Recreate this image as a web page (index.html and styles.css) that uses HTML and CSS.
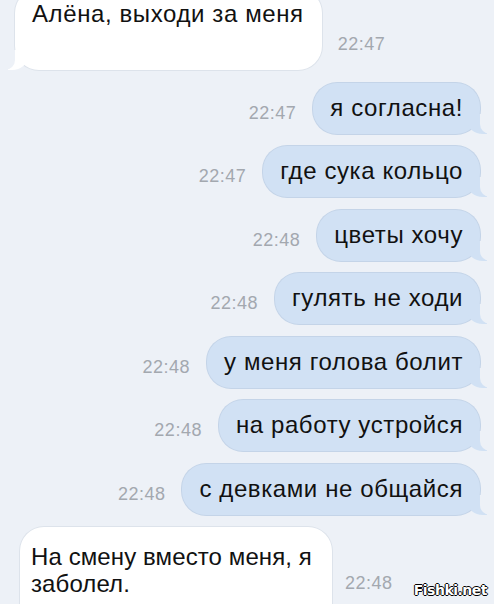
FILE: index.html
```html
<!DOCTYPE html>
<html lang="ru">
<head>
    <meta charset="UTF-8">
    <meta name="viewport" content="width=device-width, initial-scale=1.0">
    <title>Чат</title>
    <link rel="stylesheet" href="styles.css">
</head>
<body>
    <div class="chat">
        <!-- incoming -->
        <div class="row in first">
            <div class="bubble">Алёна, выходи за меня</div>
            <span class="time">22:47</span>
        </div>

        <div class="row out">
            <span class="time">22:47</span>
            <div class="bubble">я согласна!</div>
        </div>
        <div class="row out">
            <span class="time">22:47</span>
            <div class="bubble">где сука кольцо</div>
        </div>
        <div class="row out">
            <span class="time">22:48</span>
            <div class="bubble">цветы хочу</div>
        </div>
        <div class="row out">
            <span class="time">22:48</span>
            <div class="bubble">гулять не ходи</div>
        </div>
        <div class="row out">
            <span class="time">22:48</span>
            <div class="bubble">у меня голова болит</div>
        </div>
        <div class="row out">
            <span class="time">22:48</span>
            <div class="bubble">на работу устройся</div>
        </div>
        <div class="row out">
            <span class="time">22:48</span>
            <div class="bubble">с девками не общайся</div>
        </div>

        <div class="row in last">
            <div class="bubble">На смену вместо меня, я<br>заболел.</div>
            <span class="time">22:48</span>
        </div>
    </div>

    <div class="watermark">Fishki.net</div>
</body>
</html>
```

FILE: styles.css
```css
body {
    margin: 0;
    width: 494px;
    height: 604px;
    overflow: hidden;
    background-color: #edf1f7;
    font-family: "Liberation Sans", Arial, sans-serif;
    position: relative;
}
.chat {
    display: flex;
    flex-direction: column;
    gap: 12.5px;
    padding-right: 14px;
}
.row {
    display: flex;
    align-items: flex-end;
}
.out {
    justify-content: flex-end;
    gap: 17px;
}
.bubble {
    position: relative;
    font-size: 24px;
    letter-spacing: 0.6px;
    line-height: 29px;
    color: #111;
    padding: 10px 17px 12px 17px;
    border-radius: 24px;
}
.out .bubble {
    background-color: #d1e1f4;
    box-shadow: 0 0 0 1px #c4d4e8;
}
.in .bubble {
    background-color: #ffffff;
    box-shadow: 0 0 0 1px #dde3eb;
}
.time {
    font-size: 18px;
    letter-spacing: 0.5px;
    line-height: 18px;
    color: #a3a8af;
    margin-bottom: 12px;
}

/* bubble tails */
.bubble::before,
.bubble::after {
    content: "";
    position: absolute;
    bottom: 0;
    height: 20px;
}
.out .bubble::before {
    right: -7px;
    width: 20px;
    background-color: #d1e1f4;
    border-bottom-left-radius: 16px 14px;
}
.out .bubble::after {
    right: -10px;
    width: 10px;
    background-color: #edf1f7;
    border-bottom-left-radius: 10px;
}
.in .bubble::before {
    left: -7px;
    width: 20px;
    background-color: #ffffff;
    border-bottom-right-radius: 16px 14px;
}
.in .bubble::after {
    left: -10px;
    width: 10px;
    background-color: #edf1f7;
    border-bottom-right-radius: 10px;
}

.first {
    margin-left: 15px;
    gap: 16px;
}
.first .bubble {
    margin-top: -11px;
    padding: 10px 18px 42px 17px;
}
.first .time {
    margin-bottom: 17px;
}
.last {
    margin-left: 20px;
    gap: 13px;
    align-items: flex-start;
}
.last .bubble {
    letter-spacing: 0.1px;
    line-height: 27px;
    padding: 16px 20px 30px 11px;
}
.last .time {
    margin-top: 47px;
    margin-bottom: 0;
}

.watermark {
    position: absolute;
    right: 7px;
    bottom: 6px;
    font-family: "DejaVu Sans", sans-serif;
    font-weight: bold;
    font-size: 14px;
    letter-spacing: -0.5px;
    color: #ffffff;
    text-shadow: -1px 0 #000, 1px 0 #000, 0 -1px #000, 0 1px #000;
}
```
